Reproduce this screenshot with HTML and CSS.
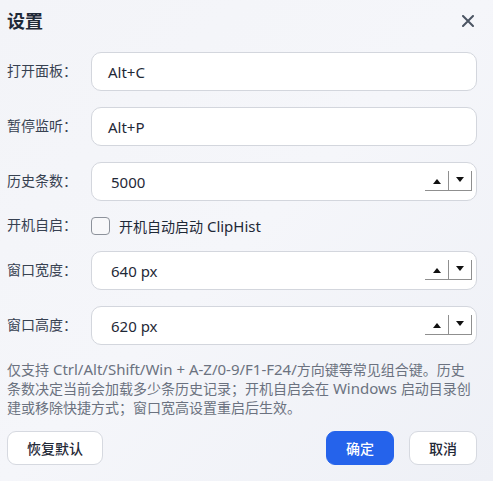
FILE: index.html
```html
<!DOCTYPE html>
<html lang="zh-CN">
<head>
<meta charset="utf-8">
<title>设置</title>
<link rel="stylesheet" href="styles.css">
</head>
<body>
<div class="dialog">
  <div class="header">
    <h1 class="title">设置</h1>
    <button class="close" aria-label="关闭">
      <svg width="12" height="12" viewBox="0 0 12 12"><path d="M1 1 L11 11 M11 1 L1 11" stroke="#4b5563" stroke-width="2" stroke-linecap="round" fill="none"/></svg>
    </button>
  </div>
  <div class="form">
    <label class="label">打开面板：</label>
    <div class="field"><span class="value">Alt+C</span></div>

    <label class="label">暂停监听：</label>
    <div class="field"><span class="value">Alt+P</span></div>

    <label class="label">历史条数：</label>
    <div class="field number"><span class="value">5000</span>
      <span class="spin"><span class="spin-btn"><span class="tri up"></span></span><span class="spin-btn"><span class="tri down"></span></span></span>
    </div>

    <label class="label">开机自启：</label>
    <div class="check-row"><span class="checkbox"></span><span class="check-text">开机自动启动<span class="en"> ClipHist</span></span></div>

    <label class="label">窗口宽度：</label>
    <div class="field number"><span class="value">640 px</span>
      <span class="spin"><span class="spin-btn"><span class="tri up"></span></span><span class="spin-btn"><span class="tri down"></span></span></span>
    </div>

    <label class="label">窗口高度：</label>
    <div class="field number"><span class="value">620 px</span>
      <span class="spin"><span class="spin-btn"><span class="tri up"></span></span><span class="spin-btn"><span class="tri down"></span></span></span>
    </div>
  </div>
  <p class="help">仅支持<span class="en"> Ctrl/Alt/Shift/Win + A-Z/0-9/F1-F24/</span>方向键等常见组合键。历史条数决定当前会加载多少条历史记录；开机自启会在<span class="en"> Windows </span>启动目录创建或移除快捷方式；窗口宽高设置重启后生效。</p>
  <div class="footer">
    <button class="btn">恢复默认</button>
    <div class="actions">
      <button class="btn primary">确定</button>
      <button class="btn">取消</button>
    </div>
  </div>
</div>
</body>
</html>
```
FILE: styles.css
```css
* { box-sizing: border-box; }
html, body { height: 100%; }
body {
  margin: 0;
  background: linear-gradient(135deg, #f3f4f8 0%, #f5f6fa 50%, #eef0f6 100%);
  font-family: "Noto Sans", "Noto Sans CJK SC", sans-serif;
  color: #1f2937;
}
.dialog {
  padding: 0 16px 0 7px;
}
.header {
  height: 42px;
  display: flex;
  align-items: center;
  justify-content: space-between;
}
.title {
  margin: 0;
  font-size: 18px;
  font-weight: 700;
  color: #1f2937;
  line-height: 24px;
}
.close {
  border: none;
  background: none;
  padding: 0;
  width: 12px;
  height: 12px;
  margin-right: 3px;
  display: flex;
}
.form {
  margin-top: 10px;
  display: grid;
  grid-template-columns: 84px 1fr;
  row-gap: 16px;
  align-items: center;
}
.label {
  font-size: 14px;
  color: #374151;
  line-height: 20px;
  margin-top: -2px;
}
.field {
  height: 39px;
  background: #fff;
  border: 1px solid #d3d6dd;
  border-radius: 10px;
  display: flex;
  align-items: center;
  padding: 0 4px 0 16px;
}
.field.number { padding-left: 19px; }
.value {
  flex: 1;
  font-size: 15px;
  color: #1f2937;
}
.spin {
  display: flex;
  height: 20px;
  margin-top: -2px;
}
.spin-btn {
  width: 23px;
  height: 20px;
  border-right: 1px solid #8f8f8f;
  border-bottom: 1px solid #8f8f8f;
  display: flex;
  align-items: center;
  justify-content: center;
}
.spin-btn:first-child { width: 24px; }
.tri {
  width: 0;
  height: 0;
  border-left: 4px solid transparent;
  border-right: 4px solid transparent;
}
.tri.up { border-bottom: 5px solid #111; margin-top: 2px; }
.tri.down { border-top: 5px solid #111; margin-top: -1px; }
.check-row {
  height: 18px;
  display: flex;
  align-items: center;
}
.checkbox {
  width: 19px;
  height: 18px;
  border: 1.5px solid #8d929b;
  border-radius: 4px;
  background: #f8f8fa;
  margin-right: 9px;
}
.check-text {
  font-size: 14px;
  color: #1f2937;
}
.en { font-size: 15px; line-height: 1; }
.help {
  margin: 15px 4px 0 0;
  font-size: 14px;
  line-height: 19px;
  color: #6b7280;
}
.footer {
  margin-top: 14px;
  display: flex;
  justify-content: space-between;
}
.actions {
  display: flex;
  gap: 15px;
}
.btn {
  height: 34px;
  padding: 0 19px;
  border: 1px solid #d6d9e0;
  border-radius: 9px;
  background: #fff;
  font-family: "Noto Sans", "Noto Sans CJK SC", sans-serif;
  font-size: 14px;
  font-weight: 500;
  color: #1f2937;
}
.btn.primary {
  background: #2563eb;
  border-color: #2563eb;
  color: #fff;
}
```
